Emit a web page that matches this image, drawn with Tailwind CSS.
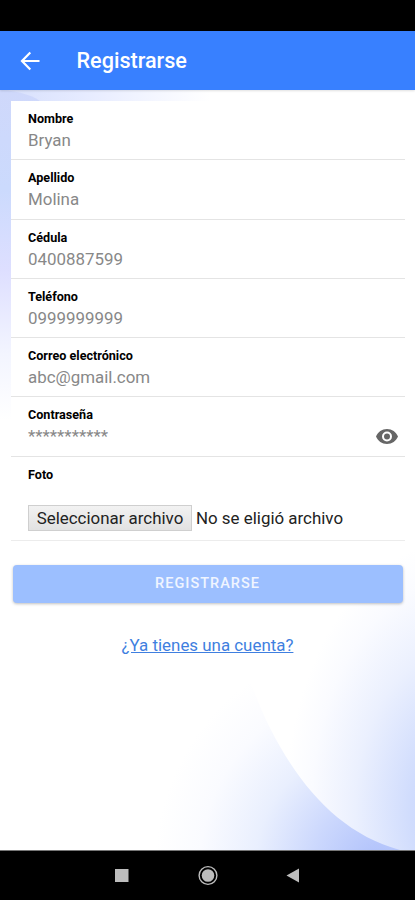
<!DOCTYPE html>
<html lang="es">
<head>
  <meta charset="UTF-8" />
  <meta name="viewport" content="width=device-width, initial-scale=1.0" />
  <title>Registrarse</title>
  <script src="https://cdn.jsdelivr.net/npm/@tailwindcss/browser@4"></script>
</head>
<body class="flex flex-col h-screen overflow-hidden bg-white font-[Roboto,sans-serif]">

  <!-- Barra de estado -->
  <div class="h-[31px] shrink-0 bg-black"></div>

  <!-- Encabezado -->
  <header class="relative z-10 h-[59px] shrink-0 flex items-center bg-[#3880ff] text-white pl-5 shadow-[0_1px_2px_rgba(0,0,0,0.12)]">
    <a href="#" aria-label="Volver">
      <svg class="w-5 h-5" viewBox="0 0 20 20" fill="none" stroke="currentColor" stroke-width="2.2">
        <path d="M19.5 10H2.500M10.300 1.600L2 10l8.300 8.400" />
      </svg>
    </a>
    <h1 class="ml-[36.5px] text-[21.6px] leading-none font-medium">Registrarse</h1>
  </header>

  <main class="relative flex-1 min-h-0">
    <!-- Fondo -->
    <svg class="absolute inset-0 w-full h-full" viewBox="0 0 415 760" preserveAspectRatio="none">
      <defs>
        <linearGradient id="left" x1="0" y1="0" x2="0" y2="1">
          <stop offset="0" stop-color="#cfd8fb" />
          <stop offset="0.3" stop-color="#cbdafd" />
          <stop offset="0.55" stop-color="#dedfff" />
          <stop offset="0.8" stop-color="#f3f5ff" />
          <stop offset="1" stop-color="#ffffff" />
        </linearGradient>
        <linearGradient id="top" x1="0" y1="0" x2="1" y2="0">
          <stop offset="0" stop-color="#d6dffc" />
          <stop offset="0.4" stop-color="#e6ebff" />
          <stop offset="1" stop-color="#ffffff" />
        </linearGradient>
        <radialGradient id="right" gradientUnits="userSpaceOnUse" cx="0" cy="0" r="1" gradientTransform="translate(460 720) scale(175 270)">
          <stop offset="0" stop-color="#c3d0fb" />
          <stop offset="0.28" stop-color="#d0dcfd" />
          <stop offset="0.6" stop-color="#ebf0fe" />
          <stop offset="0.85" stop-color="#fafbff" />
          <stop offset="1" stop-color="#ffffff" />
        </radialGradient>
        <radialGradient id="corner" gradientUnits="userSpaceOnUse" cx="380" cy="775" r="225">
          <stop offset="0" stop-color="#adbffb" />
          <stop offset="0.3" stop-color="#ccd8fd" />
          <stop offset="0.55" stop-color="#e9effe" />
          <stop offset="0.8" stop-color="#fafbff" />
          <stop offset="1" stop-color="#ffffff" />
        </radialGradient>
      </defs>
      <rect width="415" height="760" fill="#fff" />
      <rect width="210" height="30" fill="url(#top)" />
      <path d="M0 0C20 1 35 6 44 14V330H0Z" fill="url(#left)" />
      <rect x="200" y="440" width="215" height="320" fill="url(#right)" />
      <path d="M130 540L235 560C252 590 258 616 271 640C302 700 342 744 400 760H130Z" fill="url(#corner)" />
    </svg>

    <!-- Formulario -->
    <form class="relative pt-[11px]">
      <div class="ml-[11px] mr-[10px] bg-white">
        <div class="h-[59.25px] pl-[17px] pt-[10px] border-b border-[#e4e4e4]">
          <label class="block text-[12.6px] leading-4 font-bold text-black">Nombre</label>
          <p class="mt-[3px] text-[16.9px] leading-5 text-[#888]">Bryan</p>
        </div>
        <div class="h-[59.25px] pl-[17px] pt-[10px] border-b border-[#e4e4e4]">
          <label class="block text-[12.6px] leading-4 font-bold text-black">Apellido</label>
          <p class="mt-[3px] text-[16.9px] leading-5 text-[#888]">Molina</p>
        </div>
        <div class="h-[59.25px] pl-[17px] pt-[10px] border-b border-[#e4e4e4]">
          <label class="block text-[12.6px] leading-4 font-bold text-black">Cédula</label>
          <p class="mt-[3px] text-[16.9px] leading-5 text-[#888]">0400887599</p>
        </div>
        <div class="h-[59.25px] pl-[17px] pt-[10px] border-b border-[#e4e4e4]">
          <label class="block text-[12.6px] leading-4 font-bold text-black">Teléfono</label>
          <p class="mt-[3px] text-[16.9px] leading-5 text-[#888]">0999999999</p>
        </div>
        <div class="h-[59.25px] pl-[17px] pt-[10px] border-b border-[#e4e4e4]">
          <label class="block text-[12.6px] leading-4 font-bold text-black">Correo electrónico</label>
          <p class="mt-[3px] text-[16.9px] leading-5 text-[#888]">abc@gmail.com</p>
        </div>
        <div class="h-[59.25px] pl-[17px] pt-[10px] pr-[7px] flex justify-between border-b border-[#e4e4e4]">
          <div>
            <label class="block text-[12.6px] leading-4 font-bold text-black">Contraseña</label>
            <p class="mt-[3px] text-[16.9px] leading-5 text-[#888]">***********</p>
          </div>
          <svg class="w-[22px] h-[15px] mt-[22px]" viewBox="0 0 22 15" fill="#666">
            <path fill-rule="evenodd" d="M11 0C6 0 1.8 3.1 0 7.5C1.8 11.9 6 15 11 15s9.2-3.1 11-7.5C20.2 3.1 16 0 11 0Zm0 12.5a5 5 0 1 1 0-10 5 5 0 0 1 0 10Z" />
            <circle cx="11" cy="7.5" r="3" />
          </svg>
        </div>
        <div class="h-[84px] pl-[17px] pt-[10px] border-b border-[#ececec]">
          <label class="block text-[12.6px] leading-4 font-bold text-black">Foto</label>
          <div class="mt-[22px] flex items-center text-[16.9px] leading-5 text-[#222]">
            <button type="button" class="w-[164px] h-[26px] border border-[#cfcfcf] bg-linear-to-b from-[#f2f2f2] to-[#e2e2e2] whitespace-nowrap">Seleccionar archivo</button>
            <span class="ml-1 whitespace-nowrap">No se eligió archivo</span>
          </div>
        </div>
      </div>

      <button type="button" class="block w-[390px] h-[38px] mx-auto mt-6 rounded-[4px] bg-[#9cbfff] text-white/85 text-[14.5px] font-medium tracking-[1px] shadow-[0_1px_3px_rgba(0,0,0,0.25)]">REGISTRARSE</button>

      <div class="mt-[31px] text-center">
        <a href="#" class="text-[16.9px] leading-5 text-[#3f7fe0] underline">¿Ya tienes una cuenta?</a>
      </div>
    </form>
  </main>

  <!-- Barra de navegación -->
  <nav class="h-[50px] shrink-0 bg-black border-t border-[#777]">
    <svg class="w-full h-[49px]" viewBox="0 0 415 49" fill="#bdbdbd">
      <rect x="115" y="18" width="13.5" height="13" />
      <circle cx="208" cy="24.5" r="6.3" />
      <circle cx="208" cy="24.5" r="8.9" fill="none" stroke="#bdbdbd" stroke-width="1.4" />
      <path d="M299 17.5v14L286.5 24.5Z" />
    </svg>
  </nav>

</body>
</html>
